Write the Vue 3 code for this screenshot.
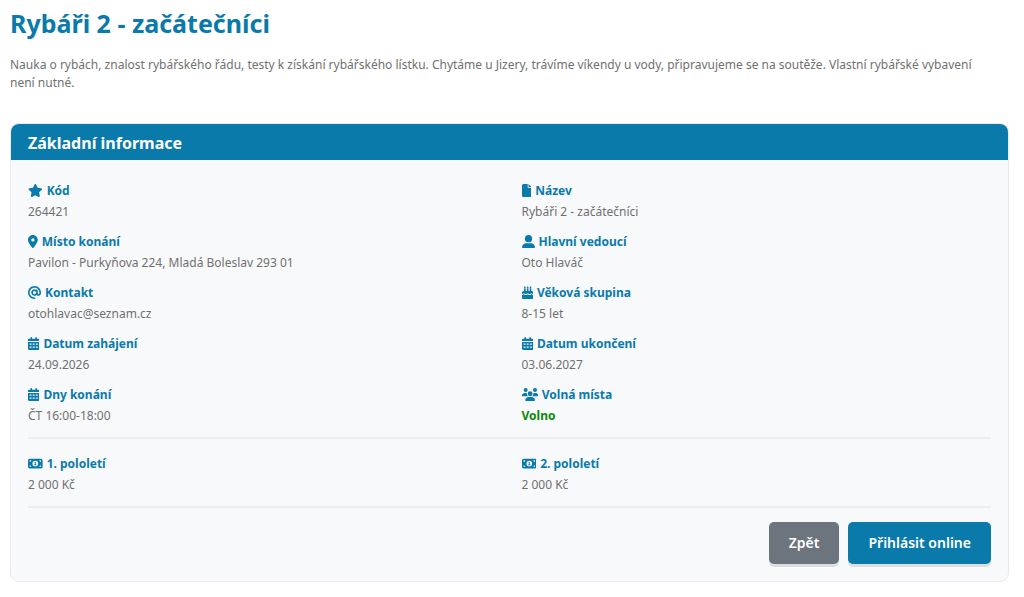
<script setup>
const star = [576, 'M316.9 18C311.6 7 300.4 0 288.1 0s-23.4 7-28.8 18L195 150.3 51.4 171.5c-12 1.8-22 10.2-25.7 21.7s-.7 24.2 7.9 32.7L137.8 329 113.2 474.7c-2 12 3 24.2 12.9 31.3s23 8 33.8 2.3l128.3-68.5 128.3 68.5c10.8 5.7 23.9 4.9 33.8-2.3s14.9-19.3 12.9-31.3L438.5 329 542.7 225.9c8.6-8.5 11.7-21.2 7.9-32.7s-13.7-19.9-25.7-21.7L381.2 150.3 316.9 18z']
const file = [384, 'M0 64C0 28.7 28.7 0 64 0H224V128c0 17.7 14.3 32 32 32H384V448c0 35.3-28.7 64-64 64H64c-35.3 0-64-28.7-64-64V64zm384 64H256V0L384 128z']
const pin = [384, 'M215.7 499.2C267 435 384 279.4 384 192C384 86 298 0 192 0S0 86 0 192c0 87.4 117 243 168.3 307.2c12.3 15.3 35.1 15.3 47.4 0zM192 128a64 64 0 1 1 0 128 64 64 0 1 1 0-128z']
const user = [512, 'M256 288A144 144 0 1 0 256 0a144 144 0 1 0 0 288zm-94.7 32C72.2 320 0 392.2 0 481.3c0 17 13.8 30.7 30.7 30.7H481.3c17 0 30.7-13.8 30.7-30.7C512 392.2 439.8 320 350.7 320H161.3z']
const at = [512, 'M256 64C150 64 64 150 64 256s86 192 192 192c17.7 0 32 14.3 32 32s-14.3 32-32 32C114.6 512 0 397.4 0 256S114.6 0 256 0S512 114.6 512 256l0 32c0 53-43 96-96 96c-29.3 0-55.6-13.2-73.2-33.9C320 371.1 289.5 384 256 384c-70.7 0-128-57.3-128-128s57.3-128 128-128c27.9 0 53.7 8.9 74.7 24.1c5.7-5 13.1-8.1 21.3-8.1c17.7 0 32 14.3 32 32l0 80 0 32c0 17.7 14.3 32 32 32s32-14.3 32-32l0-32c0-106-86-192-192-192zm64 192a64 64 0 1 0 -128 0 64 64 0 1 0 128 0z']
const cake = [448, 'M86 52L112 0L138 52A30 30 0 1 1 86 52zM198 52L224 0L250 52A30 30 0 1 1 198 52zM310 52L336 0L362 52A30 30 0 1 1 310 52zM80 112h64v80h48v-80h64v80h48v-80h64v80h16c35 0 64 29 64 64v64c-15 0-25-4-36-13c-24-19-52-19-76 0c-24 19-48 19-72 0c-24-19-56-19-80 0c-24 19-48 19-72 0c-24-19-52-19-76 0c-11 9-21 13-36 13v-64c0-35 29-64 64-64h16zM0 350c22 0 40-6 56-19c12-10 24-10 36 0c36 28 84 28 120 0c8-7 16-7 24 0c36 28 84 28 120 0c12-10 24-10 36 0c16 13 34 19 56 19v130c0 18-14 32-32 32H32c-18 0-32-14-32-32z']
const calendar = [448, 'M128 0c17.7 0 32 14.3 32 32V64H288V32c0-17.7 14.3-32 32-32s32 14.3 32 32V64h48c26.5 0 48 21.5 48 48v48H0V112C0 85.5 21.5 64 48 64H96V32c0-17.7 14.3-32 32-32zM0 192H448V464c0 26.5-21.5 48-48 48H48c-26.5 0-48-21.5-48-48zM64 256v48h76v-48zM186 256v48h76v-48zM308 256v48h76v-48zM64 376v48h76v-48zM186 376v48h76v-48zM308 376v48h76v-48z']
const users = [640, 'M144 0a80 80 0 1 1 0 160A80 80 0 1 1 144 0zM512 0a80 80 0 1 1 0 160A80 80 0 1 1 512 0zM0 298.7C0 239.8 47.8 192 106.7 192h42.7c15.9 0 31 3.5 44.6 9.7c-1.3 7.2-1.9 14.7-1.9 22.3c0 38.2 16.8 72.5 43.3 96H21.3C9.6 320 0 310.4 0 298.7zM405.3 320c26.6-23.5 43.3-57.8 43.3-96c0-7.6-.7-15-1.9-22.3c13.6-6.3 28.7-9.7 44.6-9.7h42.7C592.2 192 640 239.8 640 298.7c0 11.8-9.6 21.3-21.3 21.3zM224 224a96 96 0 1 1 192 0 96 96 0 1 1 -192 0zM128 485.3C128 411.7 187.7 352 261.3 352H378.7C452.3 352 512 411.7 512 485.3c0 14.7-11.9 26.7-26.7 26.7H154.7c-14.7 0-26.7-11.9-26.7-26.7z']
const money = [576, 'M64 64C28.7 64 0 92.7 0 128V384c0 35.3 28.7 64 64 64H512c35.3 0 64-28.7 64-64V128c0-35.3-28.7-64-64-64zM64 128h64c0 35-29 64-64 64zM512 128v64c-35 0-64-29-64-64zM64 320c35 0 64 29 64 64H64zM512 320v64h-64c0-35 29-64 64-64zM288 144a112 112 0 1 1 0 224a112 112 0 1 1 0-224zM252 192v32h20v64h-24v32h80v-32h-24V192z']

const details = [
  { icon: star, label: 'Kód', value: '264421' },
  { icon: file, label: 'Název', value: 'Rybáři 2 - začátečníci' },
  { icon: pin, label: 'Místo konání', value: 'Pavilon - Purkyňova 224, Mladá Boleslav 293 01' },
  { icon: user, label: 'Hlavní vedoucí', value: 'Oto Hlaváč' },
  { icon: at, label: 'Kontakt', value: 'otohlavac@seznam.cz' },
  { icon: cake, label: 'Věková skupina', value: '8-15 let' },
  { icon: calendar, label: 'Datum zahájení', value: '24.09.2026' },
  { icon: calendar, label: 'Datum ukončení', value: '03.06.2027' },
  { icon: calendar, label: 'Dny konání', value: 'ČT 16:00-18:00' },
  { icon: users, label: 'Volná místa', value: 'Volno', free: true },
]
const prices = [
  { icon: money, label: '1. pololetí', value: '2 000 Kč' },
  { icon: money, label: '2. pololetí', value: '2 000 Kč' },
]
</script>

<template>
  <main class="page">
    <h1>Rybáři 2 - začátečníci</h1>
    <p class="intro">Nauka o rybách, znalost rybářského řádu, testy k získání rybářského lístku. Chytáme u Jizery, trávíme víkendy u vody, připravujeme se na soutěže. Vlastní rybářské vybavení není nutné.</p>
    <section class="card">
      <h2>Základní informace</h2>
      <div class="body">
        <dl v-for="(group, g) in [details, prices]" :key="g" class="grid">
          <div v-for="item in group" :key="item.label">
            <dt>
              <svg class="icon" :viewBox="`0 0 ${item.icon[0]} 512`" aria-hidden="true">
                <path :d="item.icon[1]" fill="currentColor" fill-rule="evenodd" />
              </svg>
              <span>{{ item.label }}</span>
            </dt>
            <dd :class="{ free: item.free }">{{ item.value }}</dd>
          </div>
        </dl>
        <div class="actions">
          <button type="button" class="back">Zpět</button>
          <button type="button">Přihlásit online</button>
        </div>
      </div>
    </section>
  </main>
</template>

<style>
body {
  margin: 0;
  background: #fff;
}
</style>

<style scoped>
.page {
  padding: 7px 15px 16px 10px;
  font-family: "Noto Sans", "Open Sans", sans-serif;
  font-size: 12px;
  line-height: 18px;
  color: #707070;
}
h1 {
  margin: 0 0 17px;
  font-size: 25px;
  line-height: 32px;
  font-weight: 700;
  color: #0a7aab;
}
.intro {
  margin: 0 0 31px;
  padding-right: 16px;
}
.card {
  border: 1px solid #e9ebee;
  border-radius: 9px;
  background: #f8f9fb;
  overflow: hidden;
}
h2 {
  margin: 0;
  padding: 7px 17px 5px;
  font-size: 16px;
  line-height: 24px;
  font-weight: 700;
  color: #fff;
  background: #0a7aab;
}
.body {
  padding: 20px 17px 17px;
}
.grid {
  display: grid;
  grid-template-columns: 1fr 1fr;
  gap: 9px 24px;
  margin: 0 0 14px;
  padding-bottom: 11px;
  border-bottom: 2px solid #ebedef;
}
dt {
  display: flex;
  align-items: center;
  gap: 4px;
  line-height: 21px;
  font-weight: 700;
  color: #0a7aab;
}
.icon {
  height: 13px;
  width: auto;
  flex: none;
}
dd {
  margin: 0;
  line-height: 21px;
}
.free {
  font-weight: 700;
  color: #0a890a;
}
.actions {
  display: flex;
  justify-content: flex-end;
  gap: 9px;
}
button {
  padding: 9px 20px;
  border: 0;
  border-radius: 5px;
  font: 600 14px/24px "Noto Sans", "Open Sans", sans-serif;
  color: #fff;
  background: #0a7aab;
  box-shadow: 0 3px 0 #dddedf;
}
.back {
  background: #6c757d;
}
</style>
